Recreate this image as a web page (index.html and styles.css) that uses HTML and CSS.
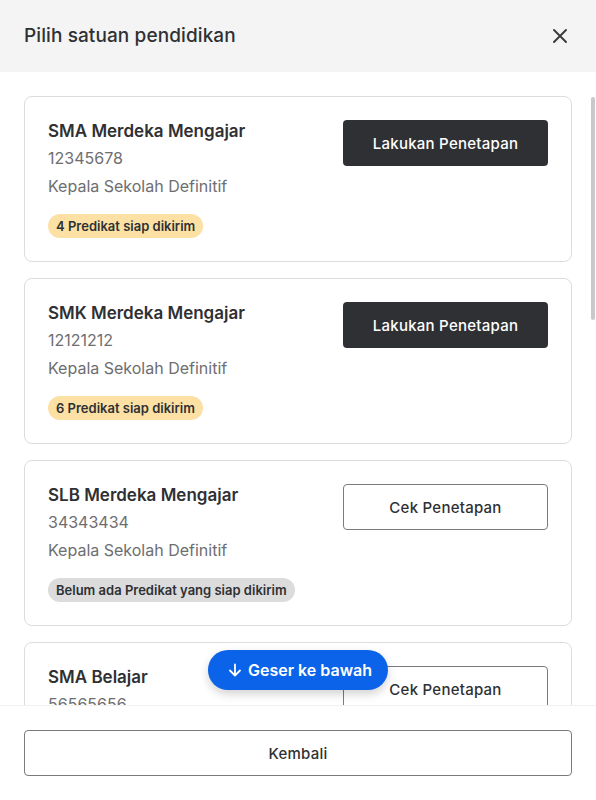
FILE: index.html
```html
<!DOCTYPE html>
<html lang="id">
<head>
<meta charset="utf-8">
<title>Pilih satuan pendidikan</title>
<link rel="stylesheet" href="styles.css">
</head>
<body>
<div class="modal">
  <header class="modal-header">
    <h1 class="modal-title">Pilih satuan pendidikan</h1>
    <button class="close-btn" aria-label="Tutup">
      <svg width="14" height="14" viewBox="0 0 14 14" fill="none"><path d="M1 1L13 13M13 1L1 13" stroke="#3a3a3c" stroke-width="1.9" stroke-linecap="round"/></svg>
    </button>
  </header>
  <main class="modal-body">
    <div class="card">
      <div class="card-info">
        <div class="card-title">SMA Merdeka Mengajar</div>
        <div class="card-line first">12345678</div>
        <div class="card-line">Kepala Sekolah Definitif</div>
        <span class="badge badge-warn">4 Predikat siap dikirim</span>
      </div>
      <button class="btn btn-dark">Lakukan Penetapan</button>
    </div>
    <div class="card">
      <div class="card-info">
        <div class="card-title">SMK Merdeka Mengajar</div>
        <div class="card-line first">12121212</div>
        <div class="card-line">Kepala Sekolah Definitif</div>
        <span class="badge badge-warn">6 Predikat siap dikirim</span>
      </div>
      <button class="btn btn-dark">Lakukan Penetapan</button>
    </div>
    <div class="card">
      <div class="card-info">
        <div class="card-title">SLB Merdeka Mengajar</div>
        <div class="card-line first">34343434</div>
        <div class="card-line">Kepala Sekolah Definitif</div>
        <span class="badge badge-gray">Belum ada Predikat yang siap dikirim</span>
      </div>
      <button class="btn btn-outline">Cek Penetapan</button>
    </div>
    <div class="card">
      <div class="card-info">
        <div class="card-title">SMA Belajar</div>
        <div class="card-line first">56565656</div>
        <div class="card-line">Kepala Sekolah Definitif</div>
        <span class="badge badge-gray">Belum ada Predikat yang siap dikirim</span>
      </div>
      <button class="btn btn-outline">Cek Penetapan</button>
    </div>
    <div class="card">
      <div class="card-info">
        <div class="card-title">SMP Belajar</div>
        <div class="card-line first">78787878</div>
        <div class="card-line">Kepala Sekolah Definitif</div>
        <span class="badge badge-gray">Belum ada Predikat yang siap dikirim</span>
      </div>
      <button class="btn btn-outline">Cek Penetapan</button>
    </div>
    <div class="card">
      <div class="card-info">
        <div class="card-title">SD Belajar</div>
        <div class="card-line first">90909090</div>
        <div class="card-line">Kepala Sekolah Definitif</div>
        <span class="badge badge-gray">Belum ada Predikat yang siap dikirim</span>
      </div>
      <button class="btn btn-outline">Cek Penetapan</button>
    </div>
  </main>
  <div class="scroll-thumb" aria-hidden="true"></div>
  <button class="scroll-pill">
    <svg width="14" height="14" viewBox="0 0 14 14" fill="none"><path d="M7 1.5V12.5M2 7.5L7 12.5L12 7.5" stroke="#fff" stroke-width="1.8" stroke-linecap="round" stroke-linejoin="round"/></svg>
    <span>Geser ke bawah</span>
  </button>
  <footer class="modal-footer">
    <button class="btn btn-outline btn-block">Kembali</button>
  </footer>
</div>
</body>
</html>
```
FILE: styles.css
```css
* { box-sizing: border-box; }
html, body { margin: 0; padding: 0; }
body {
  font-family: Inter, "Noto Sans", sans-serif;
  color: #2f3033;
  background: #fff;
}
.modal {
  position: relative;
  width: 596px;
  height: 800px;
  display: flex;
  flex-direction: column;
  background: #fff;
  overflow: hidden;
}
.modal-header {
  flex: 0 0 72px;
  background: #f4f4f4;
  display: flex;
  align-items: center;
  justify-content: space-between;
  padding: 0 29px 0 24px;
}
.modal-title {
  margin: 0;
  font-size: 19px;
  font-weight: 500;
  line-height: 24px;
  letter-spacing: 0.1px;
  color: #2f3033;
}
.close-btn {
  border: 0;
  background: none;
  padding: 0;
  width: 14px;
  height: 14px;
  display: flex;
  cursor: pointer;
}
.modal-body {
  flex: 1 1 auto;
  overflow-y: auto;
  scrollbar-width: none;
  padding: 24px;
  display: flex;
  flex-direction: column;
  gap: 16px;
}
.modal-body::-webkit-scrollbar { display: none; }
.scroll-thumb {
  position: absolute;
  right: 1px;
  top: 97px;
  width: 4px;
  height: 223px;
  border-radius: 2px;
  background: #c9c9cb;
}
.card {
  flex: 0 0 auto;
  border: 1px solid #dcdcdc;
  border-radius: 8px;
  padding: 23px;
  display: flex;
  justify-content: space-between;
  align-items: flex-start;
}
.card-info {
  display: flex;
  flex-direction: column;
  align-items: flex-start;
}
.card-title {
  font-size: 17px;
  font-weight: 600;
  line-height: 22px;
  color: #2f3033;
}
.card-line {
  font-size: 16px;
  line-height: 28px;
  color: #6e6e70;
}
.card-line.first { margin-top: 2px; }
.badge {
  margin-top: 14px;
  font-size: 13px;
  font-weight: 600;
  line-height: 16px;
  padding: 4px 8px;
  border-radius: 12px;
  color: #2f3033;
}
.badge-warn { background: #fde1a4; }
.badge-gray { background: #dcdcdd; }
.btn {
  font-family: inherit;
  font-size: 15px;
  font-weight: 500;
  letter-spacing: 0.25px;
  height: 46px;
  border-radius: 4px;
  cursor: pointer;
}
.card .btn { width: 205px; flex: 0 0 205px; }
.btn-dark {
  background: #2f3033;
  color: #fff;
  border: 0;
}
.btn-outline {
  background: #fff;
  color: #2f3033;
  border: 1px solid #7b7b7e;
}
.btn-block { width: 100%; }
.modal-footer {
  flex: 0 0 94px;
  padding: 24px;
  border-top: 1px solid #f1f1f1;
  background: #fff;
}
.scroll-pill {
  position: absolute;
  left: 50%;
  bottom: 110px;
  transform: translateX(-50%);
  height: 40px;
  padding: 0 16px 0 20px;
  border: 0;
  border-radius: 20px;
  background: #0b63ea;
  color: #fff;
  font-family: inherit;
  font-size: 16px;
  font-weight: 600;
  display: flex;
  align-items: center;
  gap: 6px;
  box-shadow: 0 4px 10px rgba(0, 0, 0, 0.18);
  white-space: nowrap;
}
.scroll-pill svg { flex: 0 0 14px; }
```
